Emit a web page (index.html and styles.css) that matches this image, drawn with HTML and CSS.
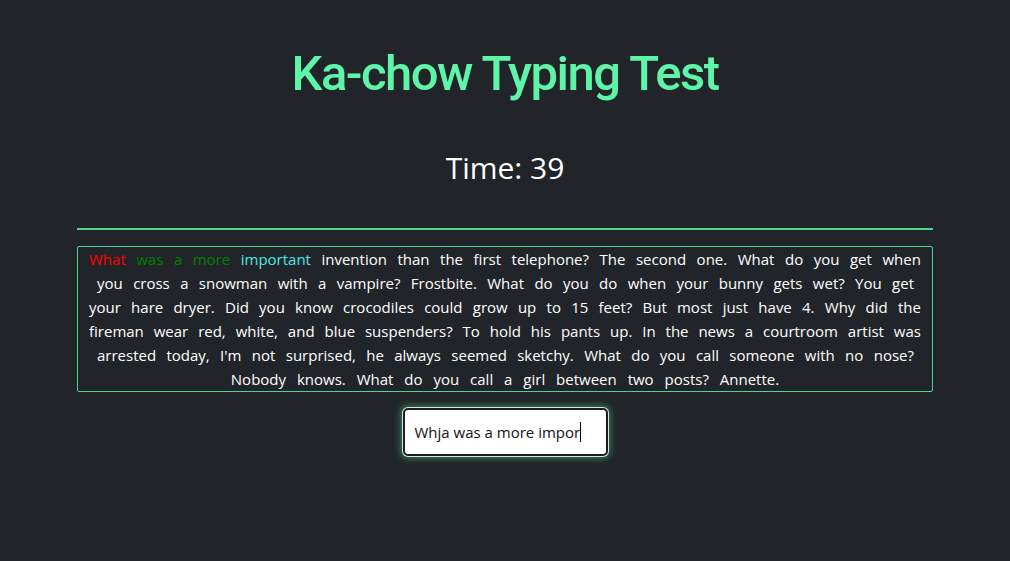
FILE: index.html
```html
<!DOCTYPE html>
<html lang="en">
<head>
<meta charset="utf-8">
<title>Ka-chow Typing Test</title>
<link rel="stylesheet" href="styles.css">
</head>
<body>
<main class="container">
  <h1 class="title">Ka-chow Typing Test</h1>
  <div class="timer">Time: 39</div>
  <hr class="divider">
  <div class="quote">
    <span class="line"><span class="wrong">What</span> <span class="right">was</span> <span class="right">a</span> <span class="right">more</span> <span class="current">important</span> <span>invention</span> <span>than</span> <span>the</span> <span>first</span> <span>telephone?</span> <span>The</span> <span>second</span> <span>one.</span> <span>What</span> <span>do</span> <span>you</span> <span>get</span> <span>when</span></span>
    <span class="line indent"><span>you</span> <span>cross</span> <span>a</span> <span>snowman</span> <span>with</span> <span>a</span> <span>vampire?</span> <span>Frostbite.</span> <span>What</span> <span>do</span> <span>you</span> <span>do</span> <span>when</span> <span>your</span> <span>bunny</span> <span>gets</span> <span>wet?</span> <span>You</span> <span>get</span></span>
    <span class="line"><span>your</span> <span>hare</span> <span>dryer.</span> <span>Did</span> <span>you</span> <span>know</span> <span>crocodiles</span> <span>could</span> <span>grow</span> <span>up</span> <span>to</span> <span>15</span> <span>feet?</span> <span>But</span> <span>most</span> <span>just</span> <span>have</span> <span>4.</span> <span>Why</span> <span>did</span> <span>the</span></span>
    <span class="line"><span>fireman</span> <span>wear</span> <span>red,</span> <span>white,</span> <span>and</span> <span>blue</span> <span>suspenders?</span> <span>To</span> <span>hold</span> <span>his</span> <span>pants</span> <span>up.</span> <span>In</span> <span>the</span> <span>news</span> <span>a</span> <span>courtroom</span> <span>artist</span> <span>was</span></span>
    <span class="line indent"><span>arrested</span> <span>today,</span> <span>I'm</span> <span>not</span> <span>surprised,</span> <span>he</span> <span>always</span> <span>seemed</span> <span>sketchy.</span> <span>What</span> <span>do</span> <span>you</span> <span>call</span> <span>someone</span> <span>with</span> <span>no</span> <span>nose?</span></span>
    <span class="line last"><span>Nobody</span> <span>knows.</span> <span>What</span> <span>do</span> <span>you</span> <span>call</span> <span>a</span> <span>girl</span> <span>between</span> <span>two</span> <span>posts?</span> <span>Annette.</span></span>
  </div>
  <div class="input-row">
    <div class="typing-box"><span class="typed">Whja was a more impor</span><span class="caret"></span></div>
  </div>
</main>
</body>
</html>
```

FILE: styles.css
```css
html, body {
  margin: 0;
  padding: 0;
  background: #212529;
  height: 100%;
}

body {
  color: #ffffff;
  font-family: "Open Sans", "Noto Sans", sans-serif;
}

.container {
  width: 856px;
  margin: 0 auto;
  display: flex;
  flex-direction: column;
  align-items: stretch;
}

.title {
  margin: 46px 0 0;
  text-align: center;
  font-family: Roboto, "Liberation Sans", sans-serif;
  font-weight: 500;
  font-size: 49px;
  line-height: 56px;
  letter-spacing: -1.5px;
  color: #5ff5a9;
}

.timer {
  margin-top: 44px;
  text-align: center;
  font-family: "Open Sans", "Noto Sans", sans-serif;
  font-weight: 400;
  font-size: 30px;
  line-height: 44px;
  color: #ffffff;
}

.divider {
  margin: 38px 0 16px;
  border: 0;
  border-top: 2px solid #4fd393;
  height: 0;
}

.quote {
  margin: 0;
  border: 1px solid #4fd393;
  border-radius: 2px;
  padding: 0 11px;
  font-family: "Open Sans", "Noto Sans", sans-serif;
  font-size: 15px;
  line-height: 24px;
  color: #ffffff;
  display: flex;
  flex-direction: column;
}

.line {
  display: block;
  text-align: justify;
  text-align-last: justify;
}

.line.indent {
  padding: 0 7px 0 8px;
}

.line.last {
  text-align: center;
  text-align-last: center;
  word-spacing: 7px;
}

.quote .wrong { color: #ff0000; }
.quote .right { color: #008000; }
.quote .current { color: #4fe6e6; }

.input-row {
  display: flex;
  justify-content: center;
  margin-top: 16px;
}

.typing-box {
  width: 205px;
  height: 48px;
  box-sizing: border-box;
  background: #ffffff;
  border: 2px solid #1a1d20;
  border-radius: 5px;
  box-shadow: 0 0 0 1px #d9e8e0, 0 0 6px 3px rgba(95, 245, 169, 0.35);
  display: flex;
  align-items: center;
  padding: 0 0 0 10px;
  font-family: "Open Sans", "Noto Sans", sans-serif;
  font-size: 15px;
  color: #111111;
}

.caret {
  display: inline-block;
  width: 1px;
  height: 20px;
  background: #000000;
  margin-left: 0;
}
```
